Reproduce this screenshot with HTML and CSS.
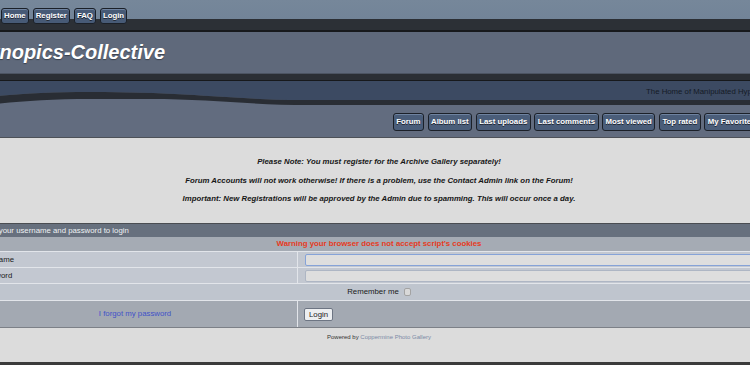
FILE: index.html
```html
<!DOCTYPE html>
<html lang="en">
<head>
    <meta charset="UTF-8">
    <title>Synopics-Collective - Login</title>
    <link rel="stylesheet" href="styles.css">
</head>
<body>
    <div class="page">
        <div class="topnav">
            <a href="#" class="tab">Home</a>
            <a href="#" class="tab">Register</a>
            <a href="#" class="tab">FAQ</a>
            <a href="#" class="tab">Login</a>
        </div>

        <div class="masthead">
            <h1 class="site-title">Synopics-Collective</h1>
        </div>
        <div class="masthead-foot"></div>

        <div class="banner">
            <svg class="banner-wave" viewBox="-29 0 816 56" preserveAspectRatio="none">
                <path d="M-29,0 H787 V19 H300 C240,19 190,11 90,11 C40,11 0,14 -29,18 Z" fill="#3c4a62"/>
                <path d="M-29,18 C0,14 40,11 90,11 C190,11 240,19 300,19 H787 V24 H310 C250,24 210,18 150,18 H90 C40,18 0,22 -29,26 Z" fill="#292d34"/>
            </svg>
            <div class="tagline">The Home of Manipulated Hypnosis</div>
            <div class="menu">
                <a href="#" class="menu-btn">Forum</a>
                <a href="#" class="menu-btn">Album list</a>
                <a href="#" class="menu-btn">Last uploads</a>
                <a href="#" class="menu-btn">Last comments</a>
                <a href="#" class="menu-btn">Most viewed</a>
                <a href="#" class="menu-btn">Top rated</a>
                <a href="#" class="menu-btn">My Favorites</a>
            </div>
        </div>

        <div class="main">
            <div class="notice">
                <p>Please Note: You must register for the Archive Gallery separately!</p>
                <p>Forum Accounts will not work otherwise! If there is a problem, use the Contact Admin link on the Forum!</p>
                <p>Important: New Registrations will be approved by the Admin due to spamming. This will occur once a day.</p>
            </div>

            <form class="login">
                <div class="login-head">Enter your username and password to login</div>
                <div class="login-warn">Warning your browser does not accept script's cookies</div>
                <div class="login-row">
                    <div class="cell">Username</div>
                    <div class="cell cell-field"><input type="text" class="field field-active"></div>
                </div>
                <div class="login-row">
                    <div class="cell">Password</div>
                    <div class="cell cell-field"><input type="password" class="field"></div>
                </div>
                <div class="login-row remember-row">
                    <label class="remember">Remember me <input type="checkbox" class="check"></label>
                </div>
                <div class="login-row submit-row">
                    <div class="cell forgot"><a href="#">I forgot my password</a></div>
                    <div class="cell cell-field"><button type="button" class="login-btn">Login</button></div>
                </div>
            </form>

            <div class="footer">
                <span class="powered">Powered by</span> <a href="#">Coppermine Photo Gallery</a>
            </div>
        </div>
        <div class="page-end"></div>
    </div>
</body>
</html>
```

FILE: styles.css
```css
* {
    margin: 0;
    padding: 0;
    box-sizing: border-box;
    font-family: "Liberation Sans", Arial, sans-serif;
}

html, body {
    overflow: hidden;
}

body {
    background-color: #dcdcdc;
    font-size: 7.8px;
    color: #1a1a1a;
}

/* the page is wider than the window, so it is cut on both sides */
.page {
    width: 816px;
    margin-left: -29px;
}

.topnav {
    display: flex;
    align-items: flex-start;
    gap: 4px;
    height: 32px;
    padding: 8px 0 0 30px;
    background: linear-gradient(#76879a 0, #728498 19px, #2c3036 19px);
    border-bottom: 2px solid #17191c;
}

.tab,
.menu-btn {
    display: block;
    padding: 0 2px;
    color: #ffffff;
    font-weight: bold;
    text-decoration: none;
    text-shadow: 0 1px 0 #1c2430;
    background-color: #475a76;
    border: 1px solid #1b2028;
    border-radius: 3px;
    box-shadow: inset 0 1px 0 #6f83a0;
}

.tab {
    height: 16px;
    line-height: 14px;
}

.masthead {
    height: 42px;
    background-color: #5f697b;
    border-bottom: 1px solid #4c5462;
}

.site-title {
    padding-left: 4px;
    font-size: 20px;
    line-height: 41px;
    font-style: italic;
    font-weight: bold;
    color: #ffffff;
    text-shadow: 0 1px 1px #3a414d;
}

.masthead-foot {
    height: 7px;
    background-color: #2b2f35;
    border-bottom: 1px solid #17191c;
}

.banner {
    position: relative;
    height: 57px;
    background-color: #626c7f;
    border-bottom: 1px solid #4d5158;
}

.banner-wave {
    position: absolute;
    top: 0;
    left: 0;
    width: 816px;
    height: 56px;
}

.tagline,
.menu {
    position: relative;
}

.tagline {
    height: 19px;
    padding: 1px 17px 0 0;
    line-height: 19px;
    text-align: right;
    color: #151b26;
}

.menu {
    display: flex;
    justify-content: flex-end;
    gap: 3.5px;
    margin-top: 13px;
    padding-right: 28px;
}

.menu-btn {
    height: 18px;
    padding: 0 2.5px;
    line-height: 16px;
    background-color: #4a5d79;
}

.notice {
    padding: 19px 0 19px;
    text-align: center;
    font-weight: bold;
    font-style: italic;
    color: #161616;
}

.notice p {
    line-height: 10px;
    margin-bottom: 8.5px;
}

.notice p:last-child {
    margin-bottom: 0;
}

.login {
    margin: 0 2px;
    border-top: 1px solid #4a4d52;
    border-bottom: 1px solid #7c8087;
}

.login-head {
    height: 13px;
    padding-left: 5px;
    line-height: 13px;
    background-color: #67707e;
    color: #eef0f3;
}

.login-warn {
    height: 14px;
    line-height: 14px;
    text-align: center;
    font-weight: bold;
    color: #e63a1e;
    background-color: #a5abb4;
}

.login-row {
    display: grid;
    grid-template-columns: 324px 1fr;
    border-top: 1px solid #e2e5ea;
    background-color: #c3c8d1;
}

.cell {
    height: 15px;
    padding: 0 5px;
    line-height: 15px;
}

.cell-field {
    display: flex;
    align-items: center;
    padding: 0 7px;
    border-left: 1px solid #e2e5ea;
}

.field {
    width: 100%;
    height: 12px;
    background-color: #dedede;
    border: 1px solid #aeb6c4;
    border-radius: 2px;
    outline: none;
}

.field-active {
    border-color: #86a3d8;
}

.remember-row {
    display: flex;
    justify-content: center;
    height: 17px;
    background-color: #bfc5ce;
}

.remember {
    display: flex;
    align-items: center;
    gap: 5px;
    line-height: 16px;
    color: #1a1a1a;
}

.check {
    appearance: none;
    width: 7px;
    height: 8px;
    margin: 0;
    background-color: #d9d9d9;
    border: 1px solid #a3a3a3;
    border-radius: 2px;
}

.submit-row {
    background-color: #a3a9b2;
}

.submit-row .cell {
    height: 26px;
    line-height: 26px;
}

.submit-row .cell-field {
    padding-left: 6px;
}

.forgot {
    text-align: center;
}

.forgot a {
    color: #4252c8;
    text-decoration: none;
}

.login-btn {
    height: 13px;
    padding: 0 4px;
    font-size: 7.8px;
    line-height: 11px;
    color: #1a1a1a;
    background-color: #eceef0;
    border: 1px solid #6d7583;
    border-radius: 2px;
}

.footer {
    height: 34px;
    padding-top: 5px;
    font-size: 6px;
    line-height: 8px;
    text-align: center;
}

.powered {
    color: #333333;
}

.footer a {
    color: #7b8aa6;
    text-decoration: none;
}

.page-end {
    height: 10px;
    background-color: #3b3b3b;
}
```
